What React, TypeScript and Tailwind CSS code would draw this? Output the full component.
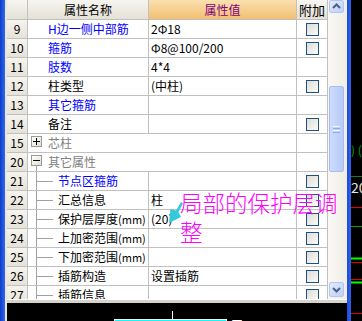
type Row = {
  no: string;
  name: string;
  unit?: string;
  value?: string;
  blue?: boolean;
  kind?: 'item' | 'group' | 'child';
  open?: boolean;
  check?: boolean;
};

const rows: Row[] = [
  { no: '9', name: 'H边一侧中部筋', value: '2Φ18', blue: true, check: true },
  { no: '10', name: '箍筋', value: 'Φ8@100/200', blue: true, check: true },
  { no: '11', name: '肢数', value: '4*4', blue: true },
  { no: '12', name: '柱类型', value: '(中柱)', check: true },
  { no: '13', name: '其它箍筋', blue: true },
  { no: '14', name: '备注', check: true },
  { no: '15', name: '芯柱', kind: 'group' },
  { no: '20', name: '其它属性', kind: 'group', open: true },
  { no: '21', name: '节点区箍筋', kind: 'child', blue: true, check: true },
  { no: '22', name: '汇总信息', kind: 'child', value: '柱', check: true },
  { no: '23', name: '保护层厚度', unit: '(mm)', kind: 'child', value: '(20)', check: true },
  { no: '24', name: '上加密范围', unit: '(mm)', kind: 'child', check: true },
  { no: '25', name: '下加密范围', unit: '(mm)', kind: 'child', check: true },
  { no: '26', name: '插筋构造', kind: 'child', value: '设置插筋', check: true },
  { no: '27', name: '插筋信息', kind: 'child', check: true },
];

function CheckBox() {
  return <div className="h-[13px] w-[13px] border border-[#1c5180] bg-gradient-to-br from-[#dddcd6] to-[#fbfbf9]" />;
}

function ExpandBox({ open }: { open?: boolean }) {
  return (
    <div className="relative mt-[2px] flex h-[11px] w-[11px] shrink-0 items-center justify-center border border-[#9d9a90] bg-gradient-to-br from-white to-[#e2dfd3]">
      <div className="h-px w-[7px] bg-black" />
      {!open && <div className="absolute h-[7px] w-px bg-black" />}
    </div>
  );
}

function NameCell({ row }: { row: Row }) {
  const color = row.blue ? 'text-[#0000ff]' : 'text-black';

  if (row.kind === 'group') {
    return (
      <div className="flex w-[269px] border-r border-[#c0c0c0] pl-[3px]">
        <div className="flex h-full w-[11px] flex-col items-center">
          <ExpandBox open={row.open} />
          {row.open && <div className="w-px flex-1 bg-[#a0a0a0]" />}
        </div>
        <span className="ml-[6px] self-center text-[#808080]">{row.name}</span>
      </div>
    );
  }

  if (row.kind === 'child') {
    return (
      <div className="flex w-[121px] items-center overflow-hidden whitespace-nowrap border-r border-[#c0c0c0] pl-[8px]">
        <div className="h-full w-px shrink-0 bg-[#a0a0a0]" />
        <div className="h-px w-[16px] shrink-0 bg-[#a0a0a0]" />
        <span className={`ml-[5px] ${color}`}>
          {row.name}
          {row.unit && <span className="text-[11px]">{row.unit}</span>}
        </span>
      </div>
    );
  }

  return (
    <div className={`flex w-[121px] items-center overflow-hidden whitespace-nowrap border-r border-[#c0c0c0] pl-[20px] ${color}`}>
      {row.name}
    </div>
  );
}

function PropertyGrid() {
  return (
    <div className="flex w-[321px] flex-col bg-white">
      {/* Header */}
      <div className="flex h-[20px] shrink-0 border-b border-[#c0c0c0]">
        <div className="w-[21px] border-r border-[#c0c0c0] bg-gradient-to-b from-[#f6f5f0] to-[#e4e1d6]" />
        <div className="flex w-[121px] items-center justify-center border-r border-[#c0c0c0] bg-gradient-to-b from-[#f6f5f0] to-[#e4e1d6] text-black">
          属性名称
        </div>
        <div className="flex w-[148px] items-center justify-center border-r border-[#c0c0c0] bg-gradient-to-b from-[#fae0b0] to-[#f2bf70] text-[#800080]">
          属性值
        </div>
        <div className="flex w-[31px] items-center justify-center border-r border-[#c0c0c0] bg-gradient-to-b from-[#f6f5f0] to-[#e4e1d6] text-[13px] text-black">
          附加
        </div>
      </div>

      {/* Rows */}
      <div className="flex h-[279px] flex-col overflow-hidden">
        {rows.map((row) => (
          <div key={row.no} className="flex h-[19px] shrink-0 border-b border-[#c0c0c0]">
            <div className="flex w-[21px] items-center justify-center border-r border-[#c0c0c0] bg-gradient-to-b from-[#f5f4ef] to-[#e5e2d7] text-black">
              {row.no}
            </div>
            <NameCell row={row} />
            {row.kind !== 'group' && (
              <div className="flex w-[148px] items-center whitespace-nowrap border-r border-[#c0c0c0] pl-[2px] text-black">
                {row.value}
              </div>
            )}
            <div className="flex w-[31px] items-center justify-center border-r border-[#c0c0c0]">
              {row.check && <CheckBox />}
            </div>
          </div>
        ))}
      </div>
    </div>
  );
}

function ScrollBar() {
  return (
    <div className="flex w-[19px] flex-col bg-gradient-to-r from-[#f9f8f4] to-[#efede5] pb-[2px] pl-[1px] pr-[3px]">
      <div className="flex h-[13px] shrink-0 items-center justify-center rounded-[2px] border border-[#b3c6f2] bg-gradient-to-br from-[#e2ebfe] to-[#bccff8]">
        <svg width="13" height="11" viewBox="0 0 13 11">
          <polyline points="3,7 6.5,3.5 10,7" fill="none" stroke="#4d6185" strokeWidth="2" />
        </svg>
      </div>
      <div className="h-[73px] shrink-0" />
      <div className="flex h-[86px] shrink-0 flex-col items-center justify-center gap-px rounded-[2px] border border-[#a9bef0] bg-gradient-to-r from-[#cddbfd] to-[#b7caf8]">
        <div className="h-px w-[7px] bg-[#eef3ff]" />
        <div className="h-px w-[7px] bg-[#8ea8ec]" />
        <div className="h-px w-[7px] bg-[#eef3ff]" />
        <div className="h-px w-[7px] bg-[#8ea8ec]" />
      </div>
      <div className="flex-1" />
      <div className="flex h-[15px] shrink-0 items-center justify-center rounded-[2px] border border-[#b3c6f2] bg-gradient-to-br from-[#e2ebfe] to-[#bccff8]">
        <svg width="13" height="13" viewBox="0 0 13 13">
          <polyline points="3,5 6.5,8.5 10,5" fill="none" stroke="#4d6185" strokeWidth="2" />
        </svg>
      </div>
    </div>
  );
}

function CadCanvas() {
  return (
    <svg className="flex-1" width="340" height="18" viewBox="0 0 340 18">
      <line x1="165.5" y1="8" x2="165.5" y2="18" stroke="#ffffff" />
      <rect x="107.5" y="16.5" width="112" height="10" fill="#00ffff" stroke="#ffffff" />
      <text x="224" y="27" fill="#ffffff" fontSize="12">王</text>
    </svg>
  );
}

function SideCanvas() {
  return (
    <svg width="11" height="321" viewBox="0 0 11 321" className="shrink-0 bg-black">
      <text x="0" y="155" fill="#00a000" fontSize="12">) (</text>
      <line x1="0" y1="176.5" x2="11" y2="176.5" stroke="#1e7a1e" />
      <text x="0" y="193" fill="#e6e6e6" fontSize="14">20</text>
      <line x1="0" y1="207.5" x2="11" y2="207.5" stroke="#e00000" />
      <line x1="0" y1="226.5" x2="11" y2="226.5" stroke="#00a000" />
      <line x1="0" y1="258.5" x2="11" y2="258.5" stroke="#00ff00" strokeWidth="2" />
      <line x1="0" y1="262.5" x2="11" y2="262.5" stroke="#e00000" />
      <line x1="0" y1="279.5" x2="11" y2="279.5" stroke="#e00000" />
      <line x1="0" y1="282.5" x2="11" y2="282.5" stroke="#00ff00" strokeWidth="2" />
      <line x1="0" y1="313.5" x2="11" y2="313.5" stroke="#e00000" />
    </svg>
  );
}

export default function App() {
  return (
    <div className="relative flex h-[321px] w-[362px] overflow-hidden bg-black font-['Noto_Sans_CJK_SC',sans-serif] text-[12px] leading-none">
      <div className="w-[5px] shrink-0 bg-gradient-to-r from-[#0d3cc9] to-[#3168ee]" />

      <div className="flex w-[342px] shrink-0 flex-col border-l-2 border-[#e9e7df]">
        <div className="flex h-[299px] shrink-0">
          <PropertyGrid />
          <ScrollBar />
        </div>
        <div className="h-[4px] shrink-0 border-t border-white bg-[#d6d3ca]" />
        <CadCanvas />
      </div>

      <div className="w-[4px] shrink-0 bg-gradient-to-r from-[#1c4ad6] to-[#2f63ec]" />
      <SideCanvas />

      {/* annotation drawn over the grid */}
      <svg className="absolute left-[165px] top-[200px]" width="20" height="25" viewBox="0 0 20 25">
        <polygon points="16,2 18,3.5 13.5,12 16,17 4,23 5.5,9 11,10.5" fill="#35c9dc" />
      </svg>
      <div className="absolute left-[180px] top-[188px] w-[162px] text-[22.5px] font-light leading-[29px] text-[#ff00ff]">
        局部的保护层调整
      </div>
    </div>
  );
}
